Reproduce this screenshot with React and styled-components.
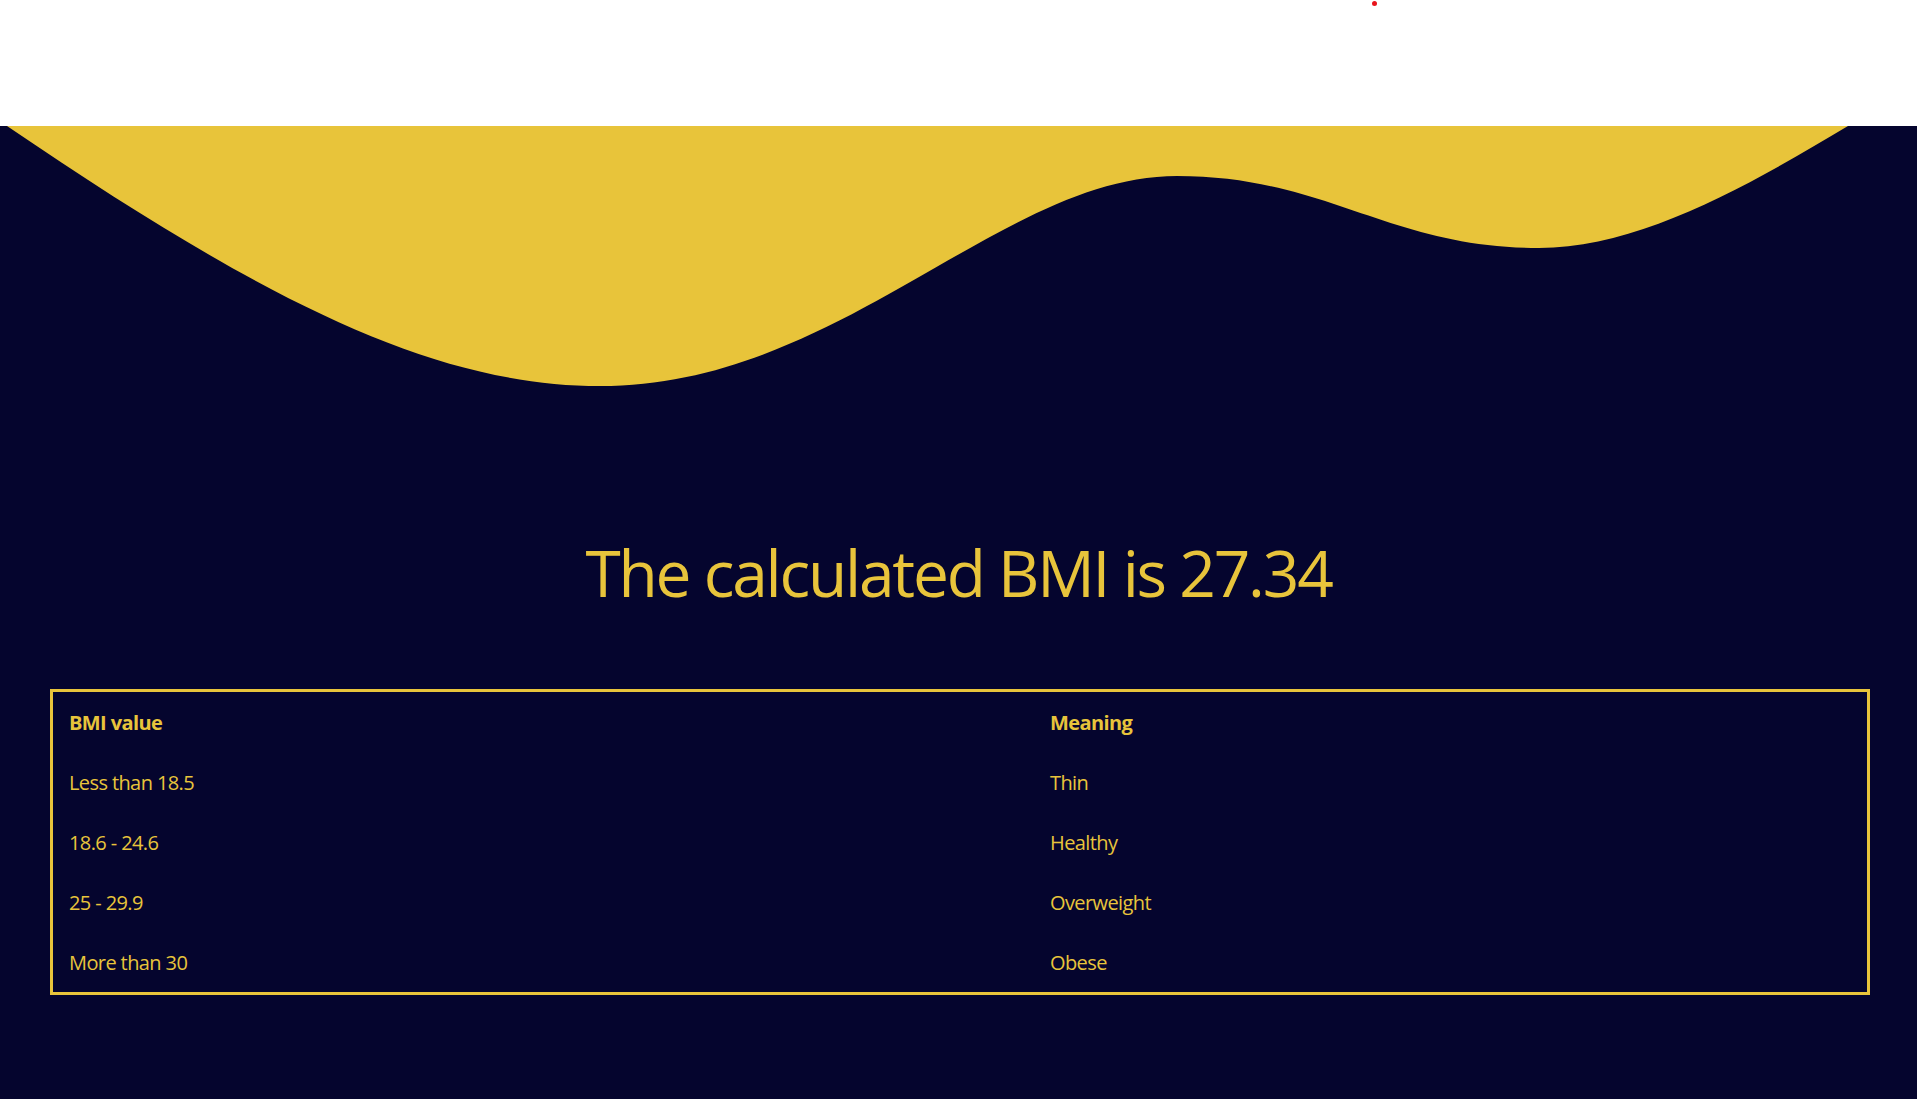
import React from 'react';
import styled, { createGlobalStyle } from 'styled-components';

const GlobalStyle = createGlobalStyle`
  html, body {
    margin: 0;
    padding: 0;
    background: #05052e;
  }
  body {
    font-family: "Open Sans", "Noto Sans", sans-serif;
  }
`;

const Page = styled.div`
  display: flex;
  flex-direction: column;
  min-height: 100vh;
`;

const TopBar = styled.header`
  position: relative;
  height: 126px;
  background: #ffffff;
`;

const Dot = styled.span`
  position: absolute;
  left: 1372px;
  top: 1px;
  width: 5px;
  height: 5px;
  border-radius: 50%;
  background: #e8141c;
`;

const Main = styled.main`
  flex: 1;
  display: flex;
  flex-direction: column;
  background: #05052e;
  padding-bottom: 104px;
`;

const Wave = styled.svg`
  display: block;
  width: 100%;
  height: 270px;
`;

const Title = styled.h1`
  margin: 133px 0 0;
  text-align: center;
  font-size: 64px;
  font-weight: 400;
  line-height: normal;
  letter-spacing: -2.2px;
  color: #e8c43b;
`;

const Table = styled.div`
  display: grid;
  grid-template-columns: 981px 1fr;
  grid-auto-rows: 60px;
  margin: 73px 47px 0 50px;
  border: 3px solid #e8c43b;
`;

const Cell = styled.div`
  display: flex;
  align-items: center;
  padding-left: 16px;
  font-size: 20px;
  font-weight: ${props => (props.head ? 700 : 400)};
  letter-spacing: -0.6px;
  color: #e8c43b;
`;

const rows = [
  ['Less than 18.5', 'Thin'],
  ['18.6 - 24.6', 'Healthy'],
  ['25 - 29.9', 'Overweight'],
  ['More than 30', 'Obese'],
];

export default function App() {
  return (
    <Page>
      <GlobalStyle />
      <TopBar>
        <Dot />
      </TopBar>
      <Main>
        <Wave viewBox="0 0 1917 270" preserveAspectRatio="none">
          <path
            fill="#e8c43a"
            d="M7,0 C257,170 430,260 600,260 C840,260 1000,50 1177,50 C1327,50 1389,122 1539,122 C1639,122 1748,60 1848,0 Z"
          />
        </Wave>
        <Title>The calculated BMI is 27.34</Title>
        <Table>
          <Cell head>BMI value</Cell>
          <Cell head>Meaning</Cell>
          {rows.map(([value, meaning]) => (
            <React.Fragment key={value}>
              <Cell>{value}</Cell>
              <Cell>{meaning}</Cell>
            </React.Fragment>
          ))}
        </Table>
      </Main>
    </Page>
  );
}
